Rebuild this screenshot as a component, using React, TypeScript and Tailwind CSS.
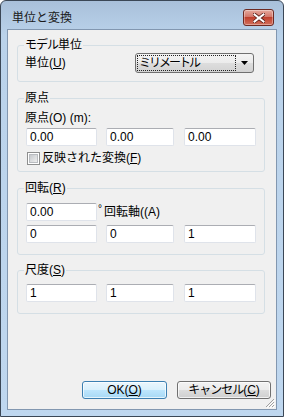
import React from "react";

const Field = ({ w, v }: { w: string; v: string }) => (
  <div
    className={`h-[18px] ${w} bg-white border border-[#dfe3ea] border-t-[#abadb3] rounded-[2px] flex items-center pl-[3px] text-[12px] leading-[14px] text-black`}
  >
    {v}
  </div>
);

const Row3 = ({ a, b, c }: { a: string; b: string; c: string }) => (
  <div className="flex">
    <Field w="w-[71px]" v={a} />
    <div className="w-[9px]" />
    <Field w="w-[68px]" v={b} />
    <div className="w-[10px]" />
    <Field w="w-[72px]" v={c} />
  </div>
);

const Legend = ({ children }: { children: React.ReactNode }) => (
  <legend className="-ml-[2px] px-[1px] text-[12px] leading-[14px] text-black">{children}</legend>
);

export default function App() {
  return (
    <div className="w-[284px] h-[417px] [font-family:'Liberation_Sans','Noto_Sans_CJK_JP',sans-serif] text-black">
      <div className="w-full h-full border border-[#3b4756] rounded-t-[6px] bg-[linear-gradient(to_bottom,#a9c0da,#bad2ea_34px,#bfd7ef)] flex flex-col">
        {/* title bar */}
        <div className="h-[28px] flex items-start justify-between pl-[11px] pr-[9px] shrink-0">
          <div className="mt-[10px] text-[12px] leading-[14px] text-[#1a1a1a]">単位と変換</div>
          <div className="mt-[8px] w-[31px] h-[17px] rounded-[3px] border border-[#6e2a22] bg-[linear-gradient(to_bottom,#e6a99c,#d3776a_45%,#c0402d_50%,#d2705c)] flex items-center justify-center shadow-[inset_0_0_0_1px_rgba(255,255,255,0.35)]">
            <svg width="12" height="10" viewBox="0 0 12 10">
              <path d="M1.5 1.5 L10.5 8.5 M10.5 1.5 L1.5 8.5" stroke="#5a1f18" strokeWidth="3.6" strokeLinecap="square" />
              <path d="M1.5 1.5 L10.5 8.5 M10.5 1.5 L1.5 8.5" stroke="#ffffff" strokeWidth="2" strokeLinecap="square" />
            </svg>
          </div>
        </div>
        {/* client area */}
        <div className="relative mx-[6px] mb-[6px] flex-1 border border-[#8297b0] bg-[#f0f0f0] flex flex-col">
          {/* group 1 */}
          <fieldset className="ml-[9px] mt-[8px] w-[247px] border border-[#d5dfe5] rounded-[3px] px-[8px] pb-[8px]">
            <Legend>
              <span className="tracking-[-1px]">モデル</span>単位
            </Legend>
            <div className="mt-[1px] flex items-center">
              <div className="w-[110px] text-[12px] leading-[14px] -ml-[1px]">
                単位(<span className="underline">U</span>)
              </div>
              <div className="w-[119px] h-[20px] rounded-[3px] border border-[#707070] bg-[linear-gradient(to_bottom,#f4f4f4,#ebebeb_50%,#dddddd_50%,#d3d3d3)] flex items-center pl-[1px] pr-[4px]">
                <div className="w-[99px] h-[16px] border border-dotted border-[#222] flex items-center pl-[1px] text-[12px] leading-[14px] tracking-[-2px]">
                  ミリメートル
                </div>
                <div className="flex-1 flex justify-end">
                  <svg width="8" height="5" viewBox="0 0 8 5">
                    <path d="M0 0 H7 L3.5 4 Z" fill="#000" />
                  </svg>
                </div>
              </div>
            </div>
          </fieldset>

          {/* group 2 */}
          <fieldset className="ml-[9px] mt-[9px] w-[247px] border border-[#d5dfe5] rounded-[3px] px-[8px] pb-[6px]">
            <Legend>原点</Legend>
            <div className="mt-[6px] text-[12px] leading-[14px] -ml-[1px]">原点(O) (m):</div>
            <div className="mt-[3px]">
              <Row3 a="0.00" b="0.00" c="0.00" />
            </div>
            <div className="mt-[5px] flex items-center">
              <div className="ml-[1px] w-[13px] h-[13px] border border-[#8e8f8f] bg-white p-[1px]">
                <div className="w-full h-full border border-[#b9bcc0] bg-[linear-gradient(135deg,#c6c9cd,#eeeeee)]" />
              </div>
              <div className="ml-[2px] text-[12px] leading-[14px]">
                反映された変換(<span className="underline">F</span>)
              </div>
            </div>
          </fieldset>

          {/* group 3 */}
          <fieldset className="ml-[9px] mt-[9px] w-[247px] border border-[#d5dfe5] rounded-[3px] px-[8px] pb-[11px]">
            <Legend>
              回転(<span className="underline">R</span>)
            </Legend>
            <div className="mt-[8px] flex items-center">
              <Field w="w-[71px]" v="0.00" />
              <div className="ml-[1px] self-start text-[10px] leading-[10px] mt-[1px]">°</div>
              <div className="ml-[2px] text-[12px] leading-[14px]">回転軸((A)</div>
            </div>
            <div className="mt-[4px]">
              <Row3 a="0" b="0" c="1" />
            </div>
          </fieldset>

          {/* group 4 */}
          <fieldset className="ml-[9px] mt-[8px] w-[247px] border border-[#d5dfe5] rounded-[3px] px-[8px] pb-[11px]">
            <Legend>
              尺度(<span className="underline">S</span>)
            </Legend>
            <div className="mt-[7px]">
              <Row3 a="1" b="1" c="1" />
            </div>
          </fieldset>

          {/* buttons */}
          <div className="mt-auto mb-[10px] flex justify-end pr-[5px]">
            <div className="w-[85px] h-[18px] rounded-[3px] border border-[#3c7fb1] bg-[linear-gradient(to_bottom,#eaf6fd,#d9f0fc_50%,#bee6fd_50%,#a7d9f5)] shadow-[inset_0_0_0_1px_rgba(255,255,255,0.7)] flex items-center justify-center text-[12px] leading-[14px]">
              OK(<span className="underline">O</span>)
            </div>
            <div className="ml-[10px] w-[94px] h-[18px] rounded-[3px] border border-[#707070] bg-[linear-gradient(to_bottom,#f2f2f2,#ebebeb_50%,#dddddd_50%,#cfcfcf)] shadow-[inset_0_0_0_1px_rgba(255,255,255,0.7)] flex items-center justify-center text-[12px] leading-[14px]">
              <span className="tracking-[-1px]">キャンセル</span>(<span className="underline">C</span>)
            </div>
          </div>

          {/* resize grip */}
          <svg className="absolute right-[1px] bottom-[1px]" width="11" height="11" viewBox="0 0 11 11">
            <path d="M10 2 L2 10 M10 5 L5 10 M10 8 L8 10" stroke="#a0a0a0" strokeWidth="1" />
            <path d="M11 3 L3 11 M11 6 L6 11 M11 9 L9 11" stroke="#ffffff" strokeWidth="1" />
          </svg>
        </div>
      </div>
    </div>
  );
}
